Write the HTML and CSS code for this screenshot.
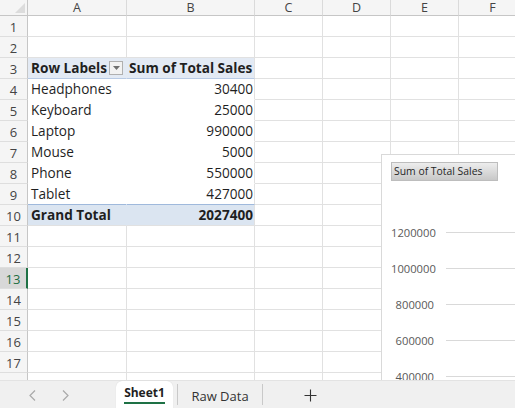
FILE: index.html
```html
<!DOCTYPE html>
<html lang="en">
<head>
<meta charset="utf-8">
<title>Pivot</title>
<link rel="stylesheet" href="styles.css">
</head>
<body>
<div class="app">
  <div class="sheet">
    <div class="grid">
      <div class="c corner"><svg width="10" height="10" viewBox="0 0 10 10"><polygon points="10,0 10,10 0,10" fill="#dcdcdc"/></svg></div>
      <div class="c ch">A</div><div class="c ch">B</div><div class="c ch">C</div><div class="c ch">D</div><div class="c ch">E</div><div class="c ch">F</div>

      <div class="c rh">1</div><div class="c"></div><div class="c"></div><div class="c"></div><div class="c"></div><div class="c"></div><div class="c"></div>
      <div class="c rh">2</div><div class="c"></div><div class="c"></div><div class="c"></div><div class="c"></div><div class="c"></div><div class="c"></div>

      <div class="c rh">3</div>
      <div class="c pv pa hd">Row Labels<span class="dd"><svg width="7" height="4" viewBox="0 0 7 4"><polygon points="0,0 7,0 3.5,4" fill="#6f6f6f"/></svg></span></div>
      <div class="c pv hd sum">Sum of Total Sales</div>
      <div class="c"></div><div class="c"></div><div class="c"></div><div class="c"></div>

      <div class="c rh">4</div><div class="c pv pa">Headphones</div><div class="c pv num">30400</div><div class="c"></div><div class="c"></div><div class="c"></div><div class="c"></div>
      <div class="c rh">5</div><div class="c pv pa">Keyboard</div><div class="c pv num">25000</div><div class="c"></div><div class="c"></div><div class="c"></div><div class="c"></div>
      <div class="c rh">6</div><div class="c pv pa">Laptop</div><div class="c pv num">990000</div><div class="c"></div><div class="c"></div><div class="c"></div><div class="c"></div>
      <div class="c rh">7</div><div class="c pv pa">Mouse</div><div class="c pv num">5000</div><div class="c"></div><div class="c"></div><div class="c"></div><div class="c"></div>
      <div class="c rh">8</div><div class="c pv pa">Phone</div><div class="c pv num">550000</div><div class="c"></div><div class="c"></div><div class="c"></div><div class="c"></div>
      <div class="c rh">9</div><div class="c pv pa pre">Tablet</div><div class="c pv num pre">427000</div><div class="c"></div><div class="c"></div><div class="c"></div><div class="c"></div>
      <div class="c rh">10</div><div class="c pa tot">Grand Total</div><div class="c tot num">2027400</div><div class="c"></div><div class="c"></div><div class="c"></div><div class="c"></div>

      <div class="c rh">11</div><div class="c"></div><div class="c"></div><div class="c"></div><div class="c"></div><div class="c"></div><div class="c"></div>
      <div class="c rh">12</div><div class="c"></div><div class="c"></div><div class="c"></div><div class="c"></div><div class="c"></div><div class="c"></div>
      <div class="c rh sel">13</div><div class="c"></div><div class="c"></div><div class="c"></div><div class="c"></div><div class="c"></div><div class="c"></div>
      <div class="c rh">14</div><div class="c"></div><div class="c"></div><div class="c"></div><div class="c"></div><div class="c"></div><div class="c"></div>
      <div class="c rh">15</div><div class="c"></div><div class="c"></div><div class="c"></div><div class="c"></div><div class="c"></div><div class="c"></div>
      <div class="c rh">16</div><div class="c"></div><div class="c"></div><div class="c"></div><div class="c"></div><div class="c"></div><div class="c"></div>
      <div class="c rh">17</div><div class="c"></div><div class="c"></div><div class="c"></div><div class="c"></div><div class="c"></div><div class="c"></div>
      <div class="c rh">18</div><div class="c"></div><div class="c"></div><div class="c"></div><div class="c"></div><div class="c"></div><div class="c"></div>
    </div>

    <div class="chart">
      <div class="field-btn">Sum of Total Sales</div>
      <div class="axis">
        <div class="tick"><span>1200000</span><i></i></div>
        <div class="tick"><span>1000000</span><i></i></div>
        <div class="tick"><span>800000</span><i></i></div>
        <div class="tick"><span>600000</span><i></i></div>
        <div class="tick"><span>400000</span><i></i></div>
      </div>
    </div>
  </div>

  <div class="tabs">
    <div class="nav">
      <svg width="7" height="11" viewBox="0 0 7 11"><polyline points="6,0.5 1,5.5 6,10.5" fill="none" stroke="#a9a9a9" stroke-width="1.2"/></svg>
      <svg width="7" height="11" viewBox="0 0 7 11"><polyline points="1,0.5 6,5.5 1,10.5" fill="none" stroke="#a9a9a9" stroke-width="1.2"/></svg>
    </div>
    <div class="tab active"><span>Sheet1</span></div>
    <div class="sep first"></div>
    <div class="tab plain">Raw Data</div>
    <div class="sep"></div>
    <div class="add"><svg width="13" height="13" viewBox="0 0 13 13"><path d="M6.5 0.5V12.5M0.5 6.5H12.5" stroke="#333" stroke-width="1.1" fill="none"/></svg></div>
  </div>
</div>
</body>
</html>
```

FILE: styles.css
```css
* { box-sizing: border-box; margin: 0; padding: 0; }
html, body { width: 515px; height: 408px; overflow: hidden; background: #fff; }
body { font-family: "Open Sans", "Liberation Sans", sans-serif; color: #1f1f1f; }

.app { display: flex; flex-direction: column; height: 408px; }
.sheet { position: relative; height: 380px; overflow: hidden; }

.grid {
  display: grid;
  grid-template-columns: 28px 99px 128px 68px 68px 68px 68px;
  grid-template-rows: 16px;
  grid-auto-rows: 21px;
  width: 527px;
}

.c {
  border-right: 1px solid #e1e1e1;
  border-bottom: 1px solid #e1e1e1;
  font-size: 13.6px;
  line-height: 18px;
  display: flex;
  align-items: center;
  padding: 0 3px 0 3px;
  white-space: nowrap;
  background: #fff;
}

.corner {
  background: #f5f5f5;
  border-right: 1px solid #c6c6c6;
  border-bottom: 1px solid #c6c6c6;
  align-items: flex-end;
  justify-content: flex-end;
  padding: 0 2px 2px 0;
}

.ch {
  background: #f5f5f5;
  border-right: 1px solid #dadada;
  border-bottom: 1px solid #c6c6c6;
  font-size: 12.5px;
  line-height: 14px;
  color: #444;
  justify-content: center;
}

.rh {
  background: #f5f5f5;
  border-right: 1px solid #c6c6c6;
  border-bottom: 1px solid #dedede;
  font-size: 13px;
  color: #444;
  justify-content: center;
  padding: 2px 0 0 0;
}
.rh.sel {
  background: #d8d8d8;
  color: #1e6e42;
  border-right: 2px solid #1e7145;
}

.pv { border-bottom-color: #fff; }
.pa { border-right-color: #fff; }
.pre { border-bottom-color: #9fb9dc; }

.hd {
  background: #e3eaf4;
  font-weight: 700;
  border-bottom-color: #b9cbe5;
}
.hd.pa { border-right-color: #e3eaf4; }
.sum { padding-left: 2px; }

.num { justify-content: flex-end; padding-right: 1px; }

.tot {
  background: #dbe5f1;
  font-weight: 700;
}
.tot.pa { border-right-color: #dbe5f1; }

.dd {
  margin-left: auto;
  width: 14px;
  height: 14px;
  border: 1px solid #b0b0b0;
  background: #f2f2f2;
  display: flex;
  align-items: center;
  justify-content: center;
}

.chart {
  position: absolute;
  left: 381px;
  top: 154px;
  width: 200px;
  height: 260px;
  background: #fff;
  border: 1px solid #d9d9d9;
  padding: 7px 0 0 9px;
}

.field-btn {
  width: 107px;
  height: 19px;
  background: linear-gradient(#ededed, #c8c8c8);
  border: 1px solid #bdbdbd;
  font-size: 10.4px;
  line-height: 17px;
  padding-left: 2px;
  color: #262626;
  white-space: nowrap;
}

.axis { margin-top: 33px; }
.tick { display: flex; align-items: center; height: 36px; }
.tick span {
  width: 43px;
  text-align: right;
  font-size: 11.2px;
  color: #595959;
}
.tick i {
  flex: 1;
  height: 1px;
  background: #d9d9d9;
  margin-left: 12px;
}

.tabs {
  height: 28px;
  background: #f0f0f0;
  border-top: 1px solid #e3e3e3;
  display: flex;
  align-items: stretch;
}
.nav {
  width: 116px;
  display: flex;
  align-items: center;
  padding: 1px 0 0 29px;
  gap: 26px;
}
.tab.active {
  width: 57px;
  background: #fff;
  border-radius: 6px 6px 0 0;
  display: flex;
  align-items: flex-end;
  justify-content: center;
  padding-bottom: 4px;
  box-shadow: 0 0 1px rgba(0,0,0,0.15);
}
.tab.active span {
  font-weight: 700;
  font-size: 12px;
  line-height: 16px;
  padding-bottom: 1px;
  border-bottom: 2px solid #1e7145;
  color: #1f1f1f;
}
.sep { width: 1px; background: #c9c9c9; margin: 3px 0; }
.sep.first { margin-left: 4px; }
.tab.plain {
  width: 84px;
  display: flex;
  align-items: center;
  justify-content: center;
  font-size: 13px;
  color: #333;
  padding-top: 2px;
}
.add {
  margin-left: 41px;
  display: flex;
  align-items: center;
  padding-top: 1px;
}
```
